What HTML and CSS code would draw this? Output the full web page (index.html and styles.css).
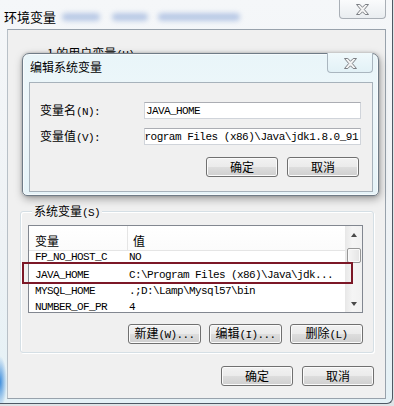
FILE: index.html
```html
<!DOCTYPE html>
<html lang="zh-CN">
<head>
<meta charset="utf-8">
<title>环境变量</title>
<link rel="stylesheet" href="styles.css">
</head>
<body>
<div class="window">
  <div class="titlebar">
    <span class="title">环境变量</span>
    <span class="glass" aria-hidden="true"><i class="g1"></i><i class="g2"></i><i class="g3"></i></span>
    <div class="close">
      <svg width="13" height="11" viewBox="0 0 13 11"><polygon points="0.5,0.5 3.8,0.5 6.5,3.2 9.2,0.5 12.5,0.5 8.3,5.5 12.5,10.5 9.2,10.5 6.5,7.8 3.8,10.5 0.5,10.5 4.7,5.5" fill="#f4f4f4" stroke="#7b7f84" stroke-width="1" stroke-linejoin="round"/></svg>
    </div>
  </div>
  <div class="client">
    <div class="group user-group">
      <div class="group-label user-label">1 的用户变量<span class="m">(U)</span></div>
    </div>
    <div class="group sys-group">
      <div class="group-label">系统变量<span class="m">(S)</span></div>
      <div class="listbox">
        <div class="list-main">
          <div class="lv-header">
            <div class="c1">变量</div>
            <div class="c2">值</div>
          </div>
          <div class="lv-rows">
            <div class="row first"><div class="c1 m">FP_NO_HOST_C</div><div class="c2 m">NO</div></div>
            <div class="row"><div class="c1 m">JAVA_HOME</div><div class="c2 m">C:\Program Files (x86)\Java\jdk...</div></div>
            <div class="row"><div class="c1 m">MYSQL_HOME</div><div class="c2 m">.;D:\Lamp\Mysql57\bin</div></div>
            <div class="row"><div class="c1 m">NUMBER_OF_PR</div><div class="c2 m">4</div></div>
          </div>
        </div>
        <div class="scrollbar">
          <div class="sb-btn"><span class="arrow-up"></span></div>
          <div class="sb-thumb"></div>
          <div class="sb-btn sb-down"><span class="arrow-down"></span></div>
        </div>
      </div>
      <div class="btn-row">
        <button class="btn">新建<span class="m">(W)...</span></button>
        <button class="btn">编辑<span class="m">(I)...</span></button>
        <button class="btn">删除<span class="m">(L)</span></button>
      </div>
    </div>
    <div class="btn-row bottom-row">
      <button class="btn">确定</button>
      <button class="btn">取消</button>
    </div>
  </div>

  <div class="red-mark" aria-hidden="true"></div>

  <div class="dialog">
    <div class="dlg-titlebar">
      <span class="dlg-title">编辑系统变量</span>
      <div class="close dlg-close">
        <svg width="13" height="11" viewBox="0 0 13 11"><polygon points="0.5,0.5 3.8,0.5 6.5,3.2 9.2,0.5 12.5,0.5 8.3,5.5 12.5,10.5 9.2,10.5 6.5,7.8 3.8,10.5 0.5,10.5 4.7,5.5" fill="#f4f4f4" stroke="#7b7f84" stroke-width="1" stroke-linejoin="round"/></svg>
      </div>
    </div>
    <div class="dlg-client">
      <div class="field">
        <label class="field-label">变量名<span class="m">(N):</span></label>
        <div class="textbox"><span class="m">JAVA_HOME</span></div>
      </div>
      <div class="field field2">
        <label class="field-label">变量值<span class="m">(V):</span></label>
        <div class="textbox scrolled"><span class="m">Program Files (x86)\Java\jdk1.8.0_91</span></div>
      </div>
      <div class="btn-row dlg-btns">
        <button class="btn">确定</button>
        <button class="btn">取消</button>
      </div>
    </div>
  </div>
</div>
</body>
</html>
```

FILE: styles.css
```css
* { box-sizing: border-box; }
html, body { margin: 0; padding: 0; }
body {
  width: 394px;
  height: 406px;
  overflow: hidden;
  background: #dfe3e6;
  font-family: "Noto Sans CJK SC", sans-serif;
  font-size: 12px;
  color: #000;
}
.m {
  font-family: "Liberation Mono", "Noto Sans CJK SC", monospace;
  font-size: 11px;
  letter-spacing: -0.6px;
}

/* outer window */
.window {
  position: relative;
  width: 393px;
  height: 404px;
  padding: 0 6px 4px 7px;
  display: flex;
  flex-direction: column;
  border-right: 1px solid #4e5964;
  border-bottom: 1px solid #4e5964;
  border-bottom-right-radius: 6px;
  background:
    radial-gradient(ellipse 7px 26px at 0 382px, rgba(35,125,215,0.85), rgba(35,125,215,0) 100%),
    linear-gradient(180deg, #f5f7f9 0%, #eef2f5 60%, #e4f1f6 100%);
}
.titlebar {
  height: 29px;
  display: flex;
  align-items: flex-start;
  flex: none;
}
.title {
  font-size: 13px;
  line-height: 16px;
  margin: 9px 0 0 -3px;
}
.glass { display: flex; margin-top: 13px; }
.glass i {
  display: block;
  height: 8px;
  border-radius: 4px;
  background: rgba(90, 130, 200, 0.38);
  filter: blur(2.5px);
}
.glass .g1 { width: 38px; margin-left: 6px; }
.glass .g2 { width: 36px; margin-left: 12px; }
.glass .g3 { width: 82px; margin-left: 10px; }

.close {
  margin-left: auto;
  margin-top: -1px;
  width: 47px;
  height: 20px;
  border: 1px solid #a9afb6;
  border-top: none;
  border-radius: 0 0 4px 4px;
  background: linear-gradient(180deg, #fbfcfd, #e9edf0);
  display: flex;
  align-items: center;
  justify-content: center;
  padding-top: 1px;
}

.client {
  flex: 1;
  display: flex;
  flex-direction: column;
  background: #f0f0f0;
  border: 1px solid #98a2ac;
  border-left-color: #b8c0c7;
}

/* group boxes */
.group {
  border: 1px solid #d5dfe5;
  border-radius: 3px;
  box-shadow: inset 1px 1px 0 #fff, 1px 1px 0 #fff;
}
.group-label {
  display: block;
  width: max-content;
  margin: -8px 0 0 4px;
  padding: 0 2px;
  line-height: 14px;
  background: #f0f0f0;
}
.user-group {
  margin: 23px 11px 0 12px;
  height: 138px;
  border-color: transparent;
  box-shadow: none;
}
.user-label { margin-left: 24px; }
.sys-group {
  margin: 20px 11px 0 12px;
  height: 142px;
  padding: 0 10px 10px 7px;
}

/* list view */
.listbox {
  margin-top: 5px;
  height: 88px;
  border: 1px solid #828790;
  background: #fff;
  display: flex;
  overflow: hidden;
}
.list-main {
  flex: 1;
  display: flex;
  flex-direction: column;
  overflow: hidden;
}
.lv-header {
  height: 25px;
  flex: none;
  display: flex;
  border-bottom: 1px solid #e5e5e5;
  background: linear-gradient(180deg, #ffffff, #fbfbfb);
}
.lv-header > div { padding-top: 8px; line-height: 14px; }
.lv-header .c1 { width: 99px; padding-left: 6px; border-right: 1px solid #e5e5e5; }
.lv-header .c2 { padding-left: 5px; }
.lv-rows { overflow: hidden; }
.row {
  display: flex;
  height: 16px;
  line-height: 16px;
  white-space: nowrap;
}
.row.first { margin-top: -1px; height: 17px; line-height: 15px; }
.row .c1 { width: 99px; flex: none; padding-left: 6px; }
.row .c2 { padding-left: 1px; }

.scrollbar {
  width: 17px;
  flex: none;
  display: flex;
  flex-direction: column;
  background: linear-gradient(90deg, #e9e9e9, #f5f5f5 40%, #f1f1f1);
  border-left: 1px solid #e8e8e8;
}
.sb-btn {
  height: 17px;
  flex: none;
  display: flex;
  align-items: center;
  justify-content: center;
}
.sb-down { margin-top: auto; }
.arrow-up {
  width: 0; height: 0;
  border-left: 3.5px solid transparent;
  border-right: 3.5px solid transparent;
  border-bottom: 4px solid #4a4a4a;
}
.arrow-down {
  width: 0; height: 0;
  border-left: 3.5px solid transparent;
  border-right: 3.5px solid transparent;
  border-top: 4px solid #4a4a4a;
}
.sb-thumb {
  margin: 5px 0 0 1px;
  width: 14px;
  height: 15px;
  border: 1px solid #979797;
  border-radius: 2px;
  background: linear-gradient(90deg, #f6f6f6, #e4e4e4);
  box-shadow: inset 0 0 0 1px #fafafa;
}

/* buttons */
.btn-row {
  display: flex;
  justify-content: flex-end;
  gap: 8px;
  margin-top: 11px;
}
.btn {
  width: 73px;
  height: 20px;
  margin: 0;
  padding: 0;
  font: inherit;
  color: #000;
  line-height: 16px;
  border: 1px solid #707070;
  border-radius: 3px;
  background: linear-gradient(180deg, #f2f2f2 0%, #ebebeb 48%, #dddddd 52%, #cfcfcf 100%);
  box-shadow: inset 0 0 0 1px #fbfbfb;
  white-space: nowrap;
}
.bottom-row {
  margin: 13px 11px 0 0;
  gap: 9px;
}
.bottom-row .btn { width: 72px; }

/* red annotation frame */
.red-mark {
  position: absolute;
  left: 22px;
  top: 262px;
  width: 331px;
  height: 22px;
  border: 2px solid #7c1827;
}

/* modal dialog */
.dialog {
  position: absolute;
  left: 22px;
  top: 53px;
  width: 357px;
  height: 143px;
  display: flex;
  flex-direction: column;
  padding: 0 5px 3px 6px;
  border: 1px solid #6f7b86;
  border-radius: 7px 7px 5px 5px;
  background: linear-gradient(180deg, #e9f5f9 0%, #eef7fa 40%, #e6f3f8 100%);
  box-shadow: 0 0 0 1px rgba(255,255,255,0.6) inset, 1px 3px 8px rgba(0,0,0,0.35), 0 0 3px rgba(0,0,0,0.25);
}
.dlg-titlebar {
  height: 28px;
  flex: none;
  display: flex;
  align-items: flex-start;
}
.dlg-title {
  margin: 6px 0 0 1px;
  line-height: 14px;
}
.dlg-close {
  width: 46px;
  height: 20px;
  margin-top: -1px;
  background: linear-gradient(180deg, #f0f9fc, #e2f1f6);
  border-color: #aab6bf;
}
.dlg-client {
  flex: 1;
  background: #f0f0f0;
  border: 1px solid #a7b2bb;
  padding: 19px 11px 0 10px;
}
.field {
  display: flex;
  align-items: center;
  height: 17px;
}
.field2 { margin-top: 9px; }
.field-label {
  width: 104px;
  flex: none;
  line-height: 14px;
}
.textbox {
  width: 217px;
  height: 17px;
  display: flex;
  align-items: center;
  padding: 0 1px;
  overflow: hidden;
  white-space: nowrap;
  background: #fff;
  border: 1px solid #d0d4da;
  border-top-color: #abadb3;
}
.textbox.scrolled { justify-content: flex-end; padding-right: 2px; }
.textbox.scrolled .m { letter-spacing: -0.5px; }
.dlg-btns {
  margin-top: 12px;
  margin-right: 2px;
  gap: 9px;
}
.dlg-btns .btn { width: 72px; }
```
